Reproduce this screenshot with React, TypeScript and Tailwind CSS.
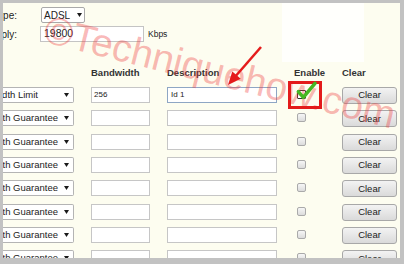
const rows = [
  { type: "Bandwidth Limit", bw: "256", desc: "Id 1", checked: true },
  { type: "Bandwidth Guarantee", bw: "", desc: "", checked: false },
  { type: "Bandwidth Guarantee", bw: "", desc: "", checked: false },
  { type: "Bandwidth Guarantee", bw: "", desc: "", checked: false },
  { type: "Bandwidth Guarantee", bw: "", desc: "", checked: false },
  { type: "Bandwidth Guarantee", bw: "", desc: "", checked: false },
  { type: "Bandwidth Guarantee", bw: "", desc: "", checked: false },
  { type: "Bandwidth Guarantee", bw: "", desc: "", checked: false },
];

function Caret() {
  return (
    <svg width="5" height="4" viewBox="0 0 5 4" className="shrink-0">
      <polygon points="0,0 5,0 2.5,4" fill="#1a1a1a" />
    </svg>
  );
}

export default function App() {
  return (
    <div className="h-[264px] w-[404px] bg-[#c2c2c2] pb-[6px] pl-[3px] pr-[4px] pt-[3px] font-['Liberation_Sans',Arial,sans-serif] text-[#222]">
      <div className="relative h-full overflow-hidden bg-[#fdfdf0]">
        {/* top settings */}
        <div className="flex h-[59px]">
          <div className="w-[279px]">
            <div className="mt-[4px] flex h-[16px] items-center">
              <div className="flex w-[14px] justify-end whitespace-nowrap text-[10px]">Type:</div>
              <div className="ml-[24px] flex h-[16px] w-[44px] items-center rounded-[2px] border border-[#a9a9a9] bg-white">
                <span className="pl-[2px] text-[10px]">ADSL</span>
                <span className="ml-auto mr-[2px]">
                  <Caret />
                </span>
              </div>
            </div>
            <div className="mt-[3px] flex h-[16px] items-center">
              <div className="flex w-[14px] justify-end whitespace-nowrap text-[10px]">Apply:</div>
              <div className="ml-[23px] flex h-[16px] w-[104px] items-center border border-[#c4c4c4] bg-white px-[3px] text-[10.5px]">
                19800
              </div>
              <span className="ml-[4px] text-[8.5px]">Kbps</span>
            </div>
          </div>
          <div className="h-[59px] w-[82px] bg-[#fffffc]" />
        </div>

        {/* header */}
        <div className="grid h-[22px] grid-cols-[88px_76px_126px_49px_55px] items-center text-[9.5px] font-bold text-[#333]">
          <div />
          <div>Bandwidth</div>
          <div>Description</div>
          <div className="ml-[1px]">Enable</div>
          <div>Clear</div>
        </div>

        {/* rows */}
        <div className="mt-[3px]">
          {rows.map((r, i) => (
            <div key={i} className="grid h-[23.33px] grid-cols-[88px_76px_126px_49px_55px] items-start">
              <div className="flex h-[16px] w-[71px] items-center rounded-r-[2px] border border-l-0 border-[#b4b4b4] bg-white text-[9.5px]">
                <div className={i === 0 ? "flex min-w-0 flex-1 justify-end whitespace-nowrap pr-[20px]" : "flex min-w-0 flex-1 justify-end whitespace-nowrap"}>
                  {r.type}
                </div>
                <span className="ml-[6px] mr-[4px]">
                  <Caret />
                </span>
              </div>
              <div className="flex h-[16px] w-[59px] items-center border border-[#c6c6c6] bg-white px-[2px] text-[8px]">
                {r.bw}
              </div>
              <div
                className={
                  i === 0
                    ? "flex h-[16px] w-[110px] items-center border border-[#8ea6c4] bg-white px-[3px] text-[8px]"
                    : "flex h-[16px] w-[110px] items-center border border-[#c6c6c6] bg-white px-[3px] text-[8px]"
                }
              >
                {r.desc}
              </div>
              <div
                className={
                  r.checked
                    ? "ml-[4px] mt-[3px] h-[9px] w-[9px] rounded-[1px] border border-[#333] bg-white"
                    : "ml-[4px] mt-[3px] h-[9px] w-[9px] rounded-[2px] border border-[#aaa] bg-gradient-to-b from-[#f6f6f6] to-[#dcdcdc]"
                }
              />
              <button className="flex h-[17px] w-[55px] items-center justify-center rounded-[3px] border border-[#a8a8a8] bg-gradient-to-b from-[#f3f3f3] to-[#dadada] text-[9.5px] text-[#222]">
                Clear
              </button>
            </div>
          ))}
        </div>

        {/* watermark */}
        <div className="pointer-events-none absolute left-[217px] top-[69px] -translate-x-1/2 -translate-y-1/2 rotate-[14deg] whitespace-nowrap text-[39px] leading-none text-[rgba(238,55,55,0.36)]">
          ©Techniquehow.com
        </div>

        {/* annotations */}
        <div className="pointer-events-none absolute left-[285px] top-[78px] h-[28px] w-[34px] border-[3px] border-[#e31b1b]" />
        <svg className="pointer-events-none absolute left-0 top-0" width="397" height="255">
          <line x1="258" y1="44" x2="231" y2="75" stroke="#e51c1c" strokeWidth="2.5" />
          <polygon points="225,82 237.7,75.8 229.3,68.6" fill="#e51c1c" />
          <polyline
            points="295.3,88.7 300.3,94.3 312,80.3"
            fill="none"
            stroke="#45b823"
            strokeWidth="3.5"
            strokeLinecap="round"
            strokeLinejoin="round"
          />
        </svg>
      </div>
    </div>
  );
}
